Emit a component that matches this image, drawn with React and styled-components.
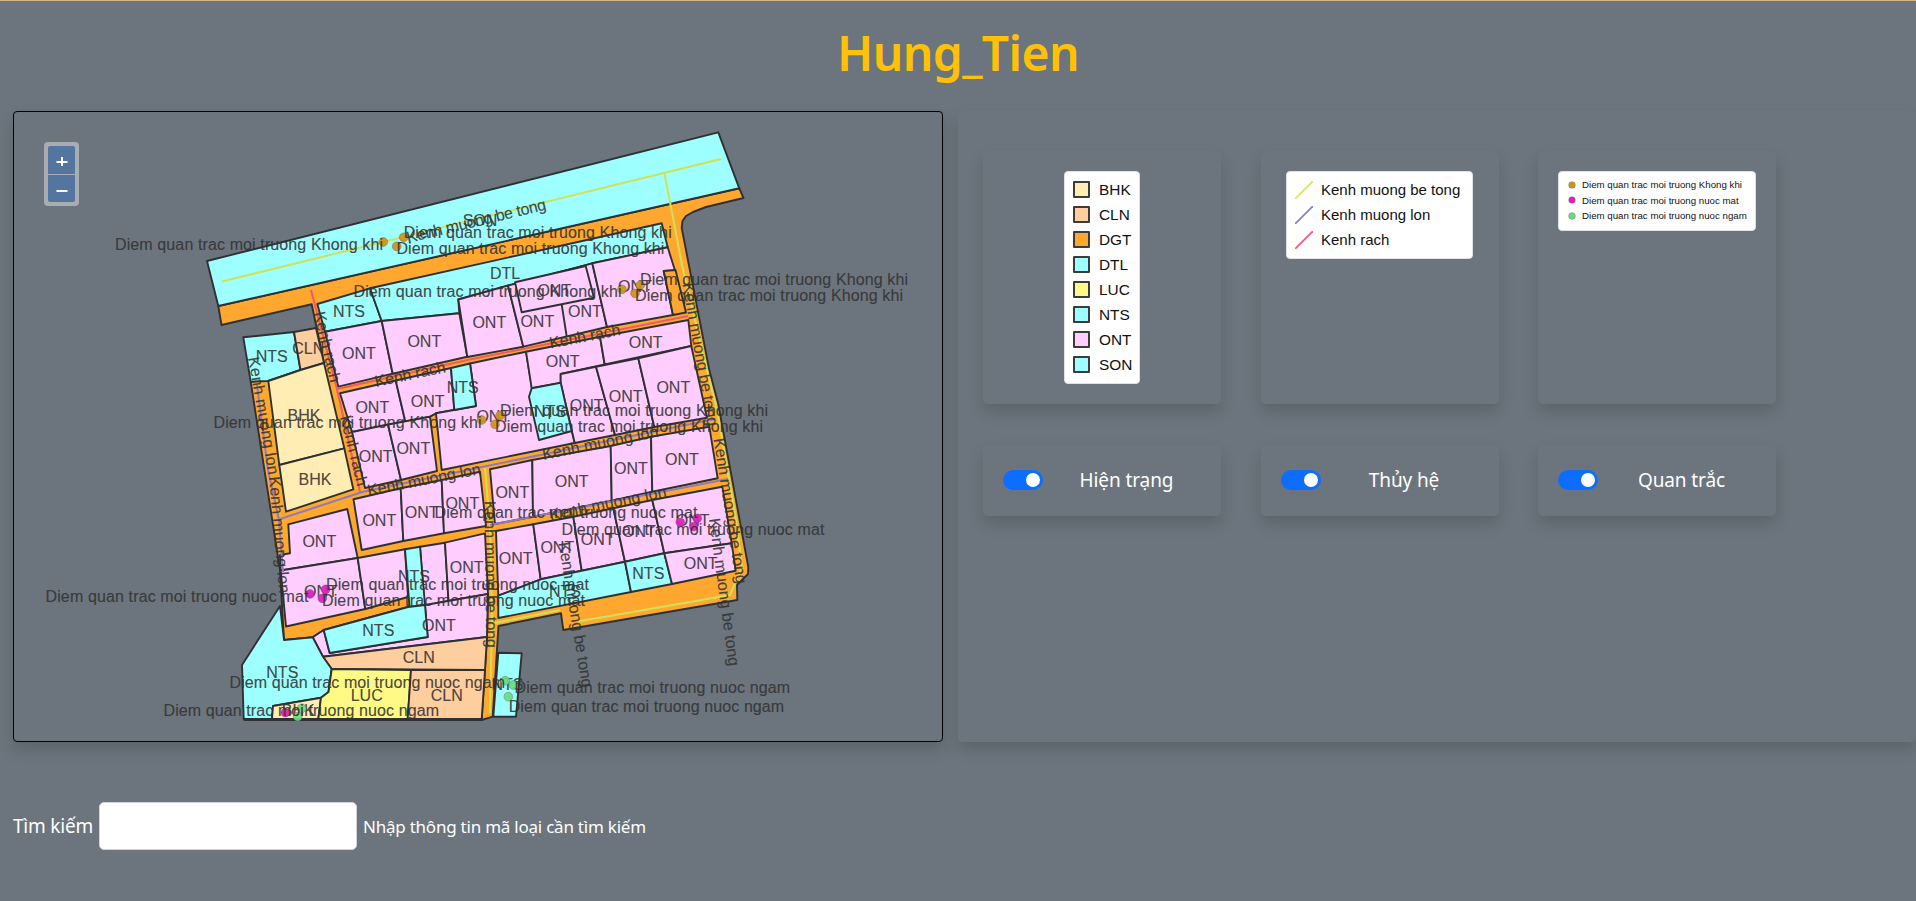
import React from "react";
import styled, { createGlobalStyle } from "styled-components";

const UI = '"Noto Sans", "Open Sans", sans-serif';
const SANS = '"Liberation Sans", Arial, sans-serif';
const shadow = "0 8px 16px rgba(0, 0, 0, 0.15)";

const Global = createGlobalStyle`
  *, *::before, *::after { box-sizing: border-box; }
  body { margin: 0; background: #6c757d; font-family: ${UI}; color: #fff; overflow: hidden; }
`;

const Page = styled.div`
  height: 901px;
  border-top: 1px solid #d2b48c;
  display: flex;
  flex-direction: column;
  overflow: hidden;
`;
const Title = styled.h1`
  margin: 0;
  height: 110px;
  padding-top: 16px;
  text-align: center;
  color: #ffc107;
  font-size: 48px;
  line-height: 72px;
  font-weight: 600;
  letter-spacing: -0.6px;
`;
const Main = styled.main`
  display: flex;
  gap: 15px;
  padding-left: 13px;
  height: 631px;
`;
const MapPanel = styled.section`
  position: relative;
  width: 930px;
  height: 631px;
  border: 1px solid #000;
  border-radius: 4px;
  box-shadow: ${shadow};
  svg { display: block; }
`;
const ZoomBox = styled.div`
  position: absolute;
  left: 30px;
  top: 30px;
  width: 35px;
  height: 64px;
  padding: 4px;
  border-radius: 4px;
  background: #a9adb1;
  display: flex;
  flex-direction: column;
  gap: 1px;
`;
const ZoomButton = styled.button`
  flex: 1;
  border: 0;
  padding: 0 0 0 1px;
  color: #fff;
  background: #5375a0;
  border-radius: ${(p) => (p.$first ? "2px 2px 0 0" : "0 0 2px 2px")};
  display: grid;
  place-items: center;
`;
const Side = styled.aside`
  flex: 1;
  box-shadow: ${shadow};
  padding: 40px 0 0 25px;
  display: grid;
  grid-template-columns: repeat(3, 238px);
  grid-template-rows: 253px 71px;
  column-gap: 39.5px;
  row-gap: 41px;
  align-content: start;
  border-radius: 4px;
`;
const Card = styled.div`
  border-radius: 5px;
  box-shadow: ${shadow};
  padding: 20px;
  display: flex;
  justify-content: center;
  align-items: ${(p) => (p.$center ? "center" : "flex-start")};
`;
const Legend = styled.ul`
  list-style: none;
  margin: 0;
  width: ${(p) => p.$w}px;
  height: ${(p) => p.$h}px;
  border: 1px solid #dee2e6;
  border-radius: 4px;
  background: #fff;
  color: #111;
  font-family: ${SANS};
  padding: ${(p) => (p.$small ? "5px 0 0 10px" : "5px 0 0 8px")};
`;
const LegendRow = styled.li`
  height: ${(p) => (p.$small ? 15.6 : 25)}px;
  display: flex;
  align-items: center;
  gap: ${(p) => (p.$small ? 7 : p.$line ? 8 : 9)}px;
  font-size: ${(p) => (p.$small ? 9.7 : p.$line ? 15 : 15.4)}px;
  white-space: nowrap;
`;
const Swatch = styled.i`
  width: 17px;
  height: 17px;
  border: 2px solid #3c3c3c;
  border-radius: 1px;
  background: ${(p) => p.$c};
`;
const Dot = styled.i`
  width: 6px;
  height: 6px;
  border-radius: 50%;
  box-shadow: 0 0 0 0.5px rgba(40, 40, 40, 0.6);
  background: ${(p) => p.$c};
`;
const Switch = styled.span`
  width: 40px;
  height: 20px;
  border-radius: 10px;
  background: #0d6efd;
  padding: 3px;
  margin-bottom: 2px;
  display: flex;
  justify-content: flex-end;
  &::after { content: ""; width: 14px; height: 14px; border-radius: 50%; background: #fff; }
`;
const SwitchLabel = styled.span`
  flex: 1;
  margin-left: 9px;
  padding-bottom: 2px;
  text-align: center;
  font-size: 19px;
  line-height: 30px;
  letter-spacing: -0.1px;
`;
const Search = styled.form`
  margin-top: 60px;
  padding-left: 13px;
  height: 48px;
  display: flex;
  align-items: center;
`;
const SearchLabel = styled.label`
  width: 86px;
  font-size: 19px;
  letter-spacing: -0.2px;
  white-space: nowrap;
`;
const SearchInput = styled.input`
  width: 258px;
  height: 48px;
  border: 1px solid #ced4da;
  border-radius: 5px;
  background: #fff;
`;
const Hint = styled.span`
  margin-left: 6px;
  font-size: 17px;
  letter-spacing: -0.23px;
  white-space: nowrap;
`;

const C = {
  BHK: "#ffedb3", CLN: "#ffce9e", DGT: "#ffa72e", DTL: "#9effff",
  LUC: "#fffa85", NTS: "#9effff", ONT: "#ffceff", SON: "#9effff",
};

const roads =
  "218.3,306 739.3,188.3 743.5,198 706,207 693,212 686,216 682.5,221 681.7,228 709.3,370 718,403 748.3,567 748,574 737,585 737.3,600 563.3,630 561,613.3 498.5,626 492.7,716.7 481.7,720 487,637 488,594 408,607 323.7,630 312.7,637.3 284,640 280,570 250.7,381.7 268,380 324,363 311.7,304.3 221.5,325";

const parcels = [
  ["SON", "207,261 718.3,132.3 739.3,188.3 218.3,306"],
  ["NTS", "317.3,304 370,288.3 381.7,321 325,331.7"],
  ["DTL", "370,288.3 661.7,223.3 667.7,247.3 592.3,263.3 458.3,299.5 459.3,313.3 381.7,321"],
  ["ONT", "325,331.7 381.7,321 392.7,373.7 338.3,386.7"],
  ["ONT", "381.7,321 459.3,313.3 467.3,356.7 392.7,373.7"],
  ["ONT", "458.3,299.5 508,285.5 523.3,346.7 467.3,357"],
  ["ONT", "508,285.5 592.3,263.3 607,327 523.3,346.7"],
  ["ONT", "515,282.3 585.7,266 594,297.7 521.7,312.3"],
  ["ONT", "592.3,263.3 667.7,247.3 675,270.5 663.7,271 673,315 607,327"],
  ["DGT", "663.7,271 675.5,270 686,312.5 673,315"],
  ["NTS", "243.3,337.3 294,332 300.5,370 268,381 250.7,381.7"],
  ["CLN", "294,332 316,328 324,363 300.5,370"],
  ["BHK", "268.3,381 300.5,370 324,363 344.3,448.3 279.3,465"],
  ["BHK", "279.3,465 344.3,448.3 353.3,489.3 286,511.7"],
  ["ONT", "340,393.3 395.7,380.5 405.3,421.5 352,432"],
  ["ONT", "395.7,380.5 451,368 454.3,410 436,413.3 430,416.7 405.3,421.5"],
  ["ONT", "352,432 388,424.5 401,480 365,488"],
  ["ONT", "388,424.5 430,416.7 437,471 401,480"],
  ["ONT", "436,413.3 476,406 470,363.5 526,351.7 532,388 560.7,383 574.7,443 441.7,470"],
  ["NTS", "451,368 470,363.5 476,406 454.3,410"],
  ["ONT", "526,351.7 600,336.7 604.7,364.5 560.7,374 560.7,383 531.7,388.3"],
  ["ONT", "600,336.7 688.3,320 691.3,346 604.7,364.5"],
  ["ONT", "560.7,374 596,366.7 615,435 574.7,443 560.7,383"],
  ["ONT", "596,366.7 638.3,358.3 654.3,427 615,435"],
  ["ONT", "638.3,358.3 691.3,346 707,417.7 654.3,427"],
  ["NTS", "531.7,388.3 560.7,382.7 571.7,431 539,440 529,396.7"],
  ["ONT", "353.5,499.3 400.7,488.3 403.3,541 361.7,550"],
  ["ONT", "400.7,488.3 441.7,480 444,533.3 403.3,541"],
  ["ONT", "441.7,480 480,471.7 486,526 444,533.3"],
  ["ONT", "490,469.3 532.3,460 533,516.7 495,524"],
  ["ONT", "532.3,460 610.7,446 611.7,500.7 533,516.7"],
  ["ONT", "610.7,446 651,436.7 652.3,491.7 611.7,500.7"],
  ["ONT", "651,436.7 709.3,426.7 717.7,478.3 652.3,491.7"],
  ["ONT", "288.3,524.3 347.3,509 357.7,558 280.7,570.5 280,555 290,553.3"],
  ["ONT", "280.7,570.5 357.7,558 365.3,609 286,626.5"],
  ["ONT", "357.7,558 405,549.3 408,597 365.3,609"],
  ["ONT", "420,546.7 445,542.7 448.5,601 424.5,606"],
  ["ONT", "445,542.7 485,533.3 488,594 448.5,601"],
  ["NTS", "405,549.3 420,546.7 425,605 409.5,607"],
  ["ONT", "425,605 488,594 487,637 323,656.7 312.7,637.3 323.7,630 329.7,653 427.7,637"],
  ["NTS", "323.7,630 408,607 425,605 427.7,637 329.7,653"],
  ["CLN", "323,656.7 487,637 485,670 331.7,669"],
  ["NTS", "280,606 284,640 312.7,637.3 323,656.7 331.7,669 328.5,692 321,697.7 273,706 272,719 243.7,719 242,665"],
  ["BHK", "273,706 321,697.7 318.3,719 272,719"],
  ["LUC", "331.7,669 411,670 407.7,719 318.3,719 321,697.7 328.5,692"],
  ["CLN", "411,670 485,670 481.7,719 407.7,719"],
  ["NTS", "498.3,652.7 521.7,653.3 516,716.7 493.3,716.7"],
  ["ONT", "496,531 533.3,524.3 540.7,579.3 498.3,595.7"],
  ["ONT", "533.3,524.3 573.3,516.7 581.7,570.7 540.7,579.3"],
  ["ONT", "573.3,516.7 613.3,508.3 625,561.7 581.7,570.7"],
  ["ONT", "613.3,508.3 652.3,500 664.3,553.3 625,561.7"],
  ["ONT", "652.3,500 722.3,486.7 731.7,543.3 664.3,553.3"],
  ["NTS", "498.3,595.7 540.7,579.3 625,561.7 631,592 498.3,618"],
  ["NTS", "625,561.7 664.3,553.3 672,584 631,592"],
  ["ONT", "664.3,553.3 731.7,543.3 735.7,570.7 672,584"],
];

const canals = [
  ["#d0e157", "222,281.5 721,159"],
  ["#d0e157", "664.5,173 682,265 707,370 717,410 736,520 742,567 730,595 576.7,621.7"],
  ["#d0e157", "560,610 495,623"],
  ["#d0e157", "485,468 490,525 492,617 490,713"],
  ["#8f7bb8", "257,385 268,470 279,520 283,572"],
  ["#8f7bb8", "280,519 363,491.7 486.7,466 715,419"],
  ["#8f7bb8", "490,525 728,479"],
  ["#ec5a6c", "311,290 337,389 360,492"],
  ["#ec5a6c", "337,389 470,359.5 688,316"],
];

const parcelLabels = [
  ["SON", 480, 226], ["NTS", 349, 316.7], ["ONT", 359, 359.3], ["ONT", 424.3, 347.3],
  ["NTS", 271.7, 361.7], ["CLN", 308.3, 354], ["ONT", 489.3, 328.3], ["ONT", 537.3, 327.3],
  ["ONT", 585, 317.3], ["ONT", 554.3, 295.7], ["DTL", 505, 279.3], ["ONT", 635, 292.3],
  ["ONT", 645.7, 348.3], ["ONT", 562.7, 366.7], ["BHK", 304, 420.7], ["BHK", 315, 484.7],
  ["ONT", 372.3, 413.3], ["ONT", 427.7, 407.3], ["NTS", 462.7, 393.3], ["ONT", 375.7, 462.3],
  ["ONT", 413.3, 454.3], ["ONT", 379.3, 525.7], ["ONT", 421.7, 517.7], ["ONT", 462.3, 509.3],
  ["ONT", 319.3, 547.3], ["ONT", 493.3, 422.3], ["NTS", 550, 416.5], ["ONT", 586.7, 411],
  ["ONT", 625.7, 402.3], ["ONT", 673.3, 393.3], ["ONT", 512.3, 498], ["ONT", 571.7, 486.7],
  ["ONT", 631, 474.3], ["ONT", 682, 465], ["ONT", 557.3, 553.3], ["ONT", 597.7, 544.7],
  ["ONT", 639, 536.5], ["ONT", 692.7, 526], ["ONT", 515.7, 564.3], ["ONT", 700.7, 569.3],
  ["ONT", 466.7, 572.7], ["NTS", 414, 581.7], ["ONT", 321, 596.7], ["NTS", 378.3, 636],
  ["ONT", 439, 630.7], ["NTS", 282.3, 677.7], ["CLN", 418.7, 663.3], ["LUC", 366.7, 700.7],
  ["CLN", 446.7, 700.7], ["BHK", 298.3, 715.7], ["NTS", 565, 596.7], ["NTS", 648.3, 579],
  ["NTS", 507.5, 690],
];

const BT = "Kenh muong be tong";
const ML = "Kenh muong lon";
const KR = "Kenh rach";
const canalLabels = [
  [BT, 408, 243, -13.6, 143], [KR, 376, 387, -12, 72], [KR, 550.5, 348.5, -11, 72],
  [KR, 314, 313, 77, 72], [KR, 340, 417, 76, 72], [ML, 248, 358, 80, 119],
  [ML, 269, 477, 85, 117], [ML, 368.5, 496, -11, 115], [ML, 543.5, 460, -11.5, 118],
  [ML, 550.5, 520.5, -11.5, 119], [BT, 682.5, 284, 80, 145], [BT, 713.5, 439, 81, 147],
  [BT, 484.5, 501, 89.3, 147], [BT, 558.5, 543, 80.7, 147], [BT, 709, 519, 82.3, 149],
];

const KK = "Diem quan trac moi truong Khong khi";
const NM = "Diem quan trac moi truong nuoc mat";
const NN = "Diem quan trac moi truong nuoc ngam";
const stationLabels = [
  [KK, 115, 249.6], [KK, 403.7, 237.5], [KK, 396.4, 253.5], [KK, 353.5, 297], [KK, 640, 285.3],
  [KK, 635, 301.3], [KK, 213.5, 427.7], [KK, 500, 415.7], [KK, 495, 431.7],
  [NM, 434.5, 517.9], [NM, 561.5, 534.6], [NM, 326, 590], [NM, 322, 605.9], [NM, 45.5, 601.7],
  [NN, 229.5, 688.3], [NN, 163.5, 716.2], [NN, 514.5, 692.5], [NN, 508.7, 711.9],
];
const widths = { [KK]: 268, [NM]: 263, [NN]: 275.5 };

const stations = [
  ["#d19216", [[383.3, 242], [403.7, 237.3], [396.7, 246.3], [622, 289.3], [640.3, 285], [635, 293.3], [481.7, 420], [500, 415.7], [495, 424.3]]],
  ["#e31cbf", [[680.3, 522.3], [697.3, 518.3], [693.7, 526.7], [310, 594], [325.7, 589.3], [322.3, 598.3], [285.3, 712.7]]],
  ["#6adc80", [[301.7, 708.3], [297.7, 716.7], [505.3, 680.7], [513.3, 685], [508.3, 696.7]]],
];

const MapText = styled.text`
  font-family: ${SANS};
  font-size: 16px;
  fill: #333;
  fill-opacity: 0.9;
  stroke: #333;
  stroke-width: 0.2px;
  stroke-opacity: 0.7;
`;

function LandMap() {
  return (
    <svg width="928" height="628" viewBox="14 112 928 628">
      <g stroke="#2e3134" strokeWidth="1.9" strokeLinejoin="round">
        <polygon points={roads} fill={C.DGT} />
        {parcels.map(([kind, points], i) => (
          <polygon key={i} points={points} fill={C[kind]} />
        ))}
        <path d="M561.7 304.3L566.7 336.7" />
        <path d="M243.7 719.7H482" strokeWidth="2.8" />
      </g>
      <g fill="none" strokeWidth="2">
        {canals.map(([color, points], i) => (
          <polyline key={i} points={points} stroke={color} />
        ))}
      </g>
      {parcelLabels.map(([t, x, y], i) => (
        <MapText key={i} x={x} y={y} textAnchor="middle">{t}</MapText>
      ))}
      {stations.map(([color, spots]) =>
        spots.map(([x, y]) => (
          <circle key={`${x}-${y}`} cx={x} cy={y} r="4.4" fill={color} fillOpacity="0.93" stroke="#555" strokeWidth="0.6" strokeOpacity="0.6" />
        ))
      )}
      {canalLabels.map(([t, x, y, a, w], i) => (
        <MapText key={i} transform={`translate(${x} ${y}) rotate(${a})`} textLength={w}>{t}</MapText>
      ))}
      {stationLabels.map(([t, x, y], i) => (
        <MapText key={i} x={x} y={y} textLength={widths[t]}>{t}</MapText>
      ))}
    </svg>
  );
}

const lineLegend = [[BT, "#d8e66a"], [ML, "#8b7de0"], [KR, "#f0587f"]];
const pointLegend = [[KK, "#d19216"], [NM, "#e31cbf"], [NN, "#6adc80"]];

export default function App() {
  return (
    <>
      <Global />
      <Page>
        <Title>Hung_Tien</Title>
        <Main>
          <MapPanel>
            <LandMap />
            <ZoomBox>
              <ZoomButton $first aria-label="Zoom in">
                <svg width="12" height="12" viewBox="0 0 12 12" stroke="#fff" strokeWidth="2"><path d="M.5 8H11.5M6 3V13" /></svg>
              </ZoomButton>
              <ZoomButton aria-label="Zoom out">
                <svg width="12" height="12" viewBox="0 0 12 12" stroke="#fff" strokeWidth="2"><path d="M.5 9H11.5" /></svg>
              </ZoomButton>
            </ZoomBox>
          </MapPanel>
          <Side>
            <Card>
              <Legend $w={76} $h={213}>
                {Object.entries(C).map(([name, color]) => (
                  <LegendRow key={name}><Swatch $c={color} />{name}</LegendRow>
                ))}
              </Legend>
            </Card>
            <Card>
              <Legend $w={187} $h={88}>
                {lineLegend.map(([name, color]) => (
                  <LegendRow key={name} $line>
                    <svg width="18" height="18" viewBox="0 0 18 18"><path d="M0 18L18 0" stroke={color} strokeWidth="1.8" /></svg>
                    {name}
                  </LegendRow>
                ))}
              </Legend>
            </Card>
            <Card>
              <Legend $w={198} $h={60} $small>
                {pointLegend.map(([name, color]) => (
                  <LegendRow key={name} $small><Dot $c={color} />{name}</LegendRow>
                ))}
              </Legend>
            </Card>
            {["Hiện trạng", "Thủy hệ", "Quan trắc"].map((name) => (
              <Card key={name} $center>
                <Switch />
                <SwitchLabel>{name}</SwitchLabel>
              </Card>
            ))}
          </Side>
        </Main>
        <Search>
          <SearchLabel htmlFor="search">Tìm kiếm</SearchLabel>
          <SearchInput id="search" />
          <Hint>Nhập thông tin mã loại cần tìm kiếm</Hint>
        </Search>
      </Page>
    </>
  );
}
